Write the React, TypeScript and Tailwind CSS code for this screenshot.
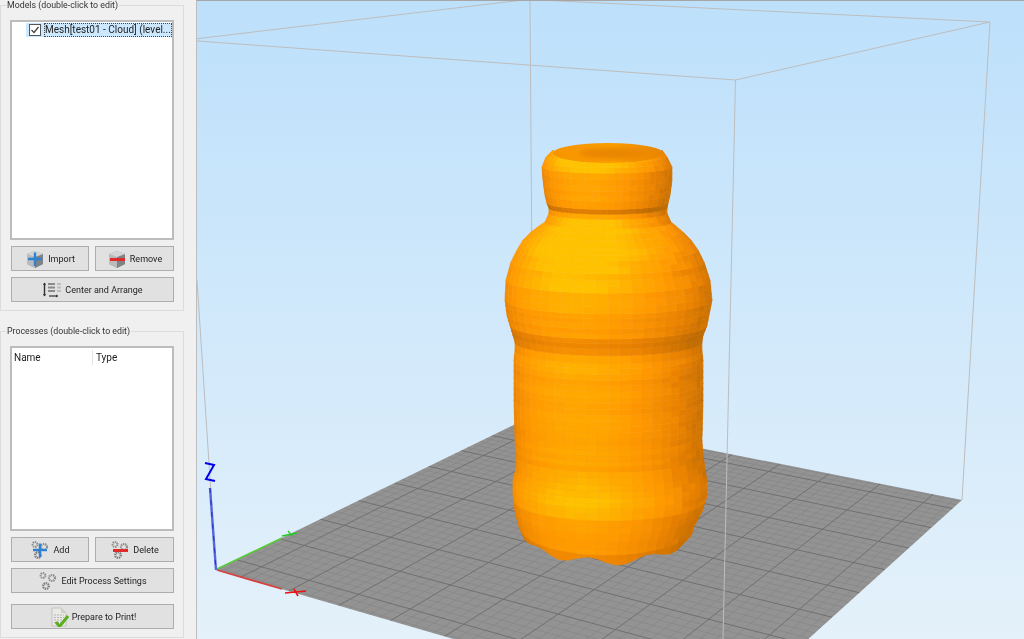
import React from 'react';

type Pt = [number, number];

// plate corners on screen: origin, x end, y end, far corner
const P00: Pt = [216, 570];
const P10: Pt = [722, 717];
const P01: Pt = [534, 415];
const P11: Pt = [962, 500];

const makeHomography = () => {
  const [x0, y0] = P00, [x1, y1] = P10, [x2, y2] = P11, [x3, y3] = P01;
  const dx1 = x1 - x2, dx2 = x3 - x2, sx = x0 - x1 + x2 - x3;
  const dy1 = y1 - y2, dy2 = y3 - y2, sy = y0 - y1 + y2 - y3;
  const d = dx1 * dy2 - dx2 * dy1;
  const g = (sx * dy2 - dx2 * sy) / d;
  const h = (dx1 * sy - sx * dy1) / d;
  const a = x1 - x0 + g * x1, b = x3 - x0 + h * x3, c = x0;
  const e = y1 - y0 + g * y1, f = y3 - y0 + h * y3, i = y0;
  return (u: number, v: number): Pt => {
    const w = g * u + h * v + 1;
    return [(a * u + b * v + c) / w, (e * u + f * v + i) / w];
  };
};
const plate = makeHomography();

// the grid does not start at the plate edge, it leaves a part cell on each side
const MINOR = 5;
const gridLines: { d: string; major: boolean }[] = [];
for (let n = -3 * MINOR; n <= 12 * MINOR; n++) {
  const major = n % MINOR === 0;
  const tu = 0.0587 + (n / MINOR) * 0.1103;
  if (tu > 0 && tu < 1) {
    const a = plate(tu, 0), b = plate(tu, 1);
    gridLines.push({ d: `M${a[0]} ${a[1]}L${b[0]} ${b[1]}`, major });
  }
  const tv = 0.052 + (n / MINOR) * 0.112;
  if (tv > 0 && tv < 1) {
    const c = plate(0, tv), e = plate(1, tv);
    gridLines.push({ d: `M${c[0]} ${c[1]}L${e[0]} ${e[1]}`, major });
  }
}

// bottle profile: axis y, left edge, right edge
const PROFILE: [number, number, number][] = [
  [150, 553, 662], [157, 546, 667], [167, 542, 672], [180, 543, 672], [195, 545, 670], [203, 547, 668],
  [208, 549, 667], [213, 549, 667], [218, 547, 669], [222, 545, 671], [226, 539, 676], [232, 531, 683],
  [240, 523, 691], [250, 517, 698], [262, 511, 704], [280, 506, 710], [300, 505, 712], [315, 507, 709],
  [325, 510, 707], [335, 513, 703], [342, 515, 702], [350, 515, 702], [360, 514, 703], [400, 514, 703],
  [440, 515, 702], [455, 516, 703], [468, 516, 705], [480, 513, 707], [495, 513, 707], [510, 515, 702],
  [522, 518, 695], [531, 522, 692],
];

const RAMP: [number, number, number, number][] = [
  [0.3, 190, 106, 0], [0.6, 232, 128, 0], [0.8, 255, 152, 0], [0.92, 255, 170, 0], [1.0, 255, 194, 0],
];
const shade = (b: number) => {
  if (b <= RAMP[0][0]) return `rgb(${RAMP[0][1]},${RAMP[0][2]},${RAMP[0][3]})`;
  for (let i = 1; i < RAMP.length; i++) {
    if (b <= RAMP[i][0]) {
      const p = RAMP[i - 1], q = RAMP[i], t = (b - p[0]) / (q[0] - p[0]);
      return `rgb(${Math.round(p[1] + (q[1] - p[1]) * t)},${Math.round(p[2] + (q[2] - p[2]) * t)},${Math.round(p[3] + (q[3] - p[3]) * t)})`;
    }
  }
  return 'rgb(255,194,0)';
};

let seed = 7;
const rnd = () => {
  seed = (seed * 16807) % 2147483647;
  return seed / 2147483647 - 0.5;
};

const buildBottle = () => {
  const rings: { y: number; l: number; r: number }[] = [];
  for (let i = 0; i < PROFILE.length - 1; i++) {
    const [y0, l0, r0] = PROFILE[i], [y1, l1, r1] = PROFILE[i + 1];
    const steps = Math.max(1, Math.round((y1 - y0) / 6));
    for (let s = 0; s < steps; s++) {
      const t = s / steps;
      rings.push({ y: y0 + (y1 - y0) * t, l: l0 + (l1 - l0) * t, r: r0 + (r1 - r0) * t });
    }
  }
  rings.push({ y: 531, l: 522, r: 692 });

  const SEGS = 26;
  const point = (ring: { y: number; l: number; r: number }, a: number, last: boolean): Pt => {
    const cx = (ring.l + ring.r) / 2, rad = (ring.r - ring.l) / 2;
    const k = last ? 0.36 : 0.09 + 0.0003 * (ring.y - 150) + (ring.y > 495 ? (ring.y - 495) * 0.004 : 0);
    const wob = last ? 4 * Math.sin(a * 8.5 + 0.3) : 0;
    return [cx + rad * Math.sin(a), ring.y + k * rad * Math.cos(a) + wob * Math.cos(a)];
  };

  const quads: { pts: string; fill: string }[] = [];
  for (let i = rings.length - 2; i >= 0; i--) {
    const top = rings[i], bot = rings[i + 1];
    const last = i === rings.length - 2;
    const slope = ((bot.r - bot.l) - (top.r - top.l)) / 2 / Math.max(1, bot.y - top.y);
    const up = Math.max(-1.2, Math.min(1.2, slope < 0 && !last ? slope * 0.4 : slope));
    const len = Math.hypot(1, up);
    let bandNoise = rnd() * 0.05;
    // grooves under the cap and at the waist, bright band on the base
    if (top.y >= 201 && top.y < 208) bandNoise -= 0.3;
    if (top.y >= 325 && top.y < 336) bandNoise -= 0.15;
    if (top.y >= 480 && top.y < 500) bandNoise += 0.1;
    for (let s = 0; s < SEGS; s++) {
      const a0 = -Math.PI / 2 + (Math.PI * s) / SEGS;
      const a1 = -Math.PI / 2 + (Math.PI * (s + 1)) / SEGS;
      const mid = (a0 + a1) / 2;
      const nx = Math.sin(mid) / len, nz = Math.cos(mid) / len, ny = up / len;
      const dot = -0.28 * nx + 0.75 * ny + 0.8 * nz;
      const side = mid > 0.7 ? rnd() * 0.09 : rnd() * 0.02;
      const b = 0.42 + 0.56 * Math.max(0, dot) + bandNoise + side;
      const p = [point(top, a0, false), point(top, a1, false), point(bot, a1, last), point(bot, a0, last)];
      quads.push({ pts: p.map(q => `${q[0].toFixed(1)},${q[1].toFixed(1)}`).join(' '), fill: shade(b) });
    }
  }
  return quads;
};
const bottleQuads = buildBottle();

const Cube: React.FC = () => (
  <>
    <path d="M2 5 L10 2 L18 5 L18 15 L10 19 L2 15 Z" fill="#9a9da0" />
    <path d="M2 5 L10 8 L10 19 L2 15 Z" fill="#b9bbbd" />
    <path d="M10 8 L18 5 L18 15 L10 19 Z" fill="#7f8386" />
    <path d="M2 5 L10 2 L18 5 L10 8 Z" fill="#d4d5d6" />
  </>
);

const Gears: React.FC = () => (
  <g fill="none">
    <circle cx="5" cy="4.5" r="2.4" stroke="#8d8d8d" strokeWidth="2" strokeDasharray="1.3 0.7" />
    <circle cx="14" cy="7" r="3" stroke="#8d8d8d" strokeWidth="2.2" strokeDasharray="1.4 0.7" />
    <circle cx="8" cy="15" r="2.8" stroke="#7c7c7c" strokeWidth="2.2" strokeDasharray="1.4 0.7" />
  </g>
);

const Plus: React.FC = () => <path d="M10 3.5V17M3 10H17" stroke="#2f82d2" strokeWidth="2.4" />;
const Minus: React.FC = () => <path d="M3 10.5H18" stroke="#e02b2b" strokeWidth="3" />;

const Arrange: React.FC = () => (
  <g>
    <path d="M2.5 3V16" stroke="#333" strokeWidth="1.4" />
    <path d="M1 5L2.5 2.5L4 5M1 14L2.5 16.5L4 14" fill="#333" />
    <path d="M6 4H13M6 7.5H13M6 11H13" stroke="#8a8a8a" strokeWidth="2" />
    <path d="M15 4H19M15 7.5H19M15 11H19" stroke="#bdbdbd" strokeWidth="2" />
    <path d="M7 16H15" stroke="#333" strokeWidth="1.2" />
    <path d="M14 14.5L16.5 16L14 17.5Z" fill="#333" />
  </g>
);

const Doc: React.FC = () => (
  <g>
    <path d="M3 1H12L17 6V19H3Z" fill="#e9e9e6" stroke="#b9b9b4" strokeWidth="0.8" />
    <path d="M12 1V6H17" fill="#cfcfca" />
    <path d="M5 8H15M5 10.5H15M5 13H15M5 15.5H15" stroke="#b4b4ae" strokeWidth="1" strokeDasharray="2 1" />
    <path d="M7 15L10.5 19.5L19 9" fill="none" stroke="#5cae1e" strokeWidth="3" />
  </g>
);

const Btn: React.FC<{ icon: React.ReactNode; label: string; className?: string }> = ({ icon, label, className = '' }) => (
  <button className={`h-[25px] flex items-center justify-center gap-[3px] bg-[#e1e1e1] border border-[#adadad] text-[9px] text-[#222] ${className}`}>
    <svg width="20" height="20" viewBox="0 0 20 20" className="shrink-0">{icon}</svg>
    <span className="mt-[2px]">{label}</span>
  </button>
);

const App: React.FC = () => {
  return (
    <div className="w-[1024px] h-[639px] flex overflow-hidden bg-[#f0f0f0] font-['Roboto','Open_Sans',sans-serif]">
      <aside className="w-[196px] shrink-0 flex flex-col gap-[15px] blur-[0.35px]">
        <fieldset className="w-[184px] min-w-0 h-[311px] border border-[#dcdcdc] pl-[9px] pr-[9px] flex flex-col">
          <legend className="-ml-[4px] px-px text-[8.8px] leading-[10px] text-[#333]">Models (double-click to edit)</legend>
          <div className="mt-[10px] h-[220px] bg-white border-2 border-[#bcbcbf] pl-[14px] pt-px">
            <div className="h-[14px] flex items-center bg-[#cce8ff]">
              <span className="w-[12px] h-[12px] ml-[3px] mr-[3px] shrink-0 bg-white border border-[#555] flex items-center justify-center">
                <svg width="10" height="10" viewBox="0 0 10 10"><path d="M1.5 5L4 7.5L8.5 2" fill="none" stroke="#444" strokeWidth="1.3" /></svg>
              </span>
              <span className="flex-1 min-w-0 h-[14px] border border-dotted border-[#444] text-[10px] leading-[12px] text-[#222] whitespace-nowrap">Mesh[test01 - Cloud] (level...</span>
            </div>
          </div>
          <div className="mt-[6px] ml-px flex gap-[6px]">
            <Btn className="w-[78px]" label="Import" icon={<><Cube /><Plus /></>} />
            <Btn className="w-[79px]" label="Remove" icon={<><Cube /><Minus /></>} />
          </div>
          <Btn className="mt-[6px] ml-px w-[163px]" label="Center and Arrange" icon={<Arrange />} />
        </fieldset>
        <fieldset className="w-[184px] min-w-0 h-[312px] border border-[#dcdcdc] pl-[9px] pr-[9px] flex flex-col">
          <legend className="-ml-[4px] px-px text-[8.8px] leading-[10px] text-[#333]">Processes (double-click to edit)</legend>
          <div className="mt-[10px] h-[185px] bg-white border-2 border-[#bcbcbf] text-[10px] text-[#222]">
            <div className="h-[19px] flex items-center">
              <span className="w-[81px] pl-[2px] border-r border-[#e4e4e4]">Name</span>
              <span className="pl-[3px]">Type</span>
            </div>
          </div>
          <div className="mt-[6px] ml-px flex gap-[6px]">
            <Btn className="w-[78px]" label="Add" icon={<><Gears /><Plus /></>} />
            <Btn className="w-[79px]" label="Delete" icon={<><Gears /><Minus /></>} />
          </div>
          <Btn className="mt-[6px] ml-px w-[163px]" label="Edit Process Settings" icon={<Gears />} />
          <Btn className="mt-[11px] ml-px w-[163px]" label="Prepare to Print!" icon={<Doc />} />
        </fieldset>
      </aside>

      <main className="flex-1 h-[639px] border-l border-t border-l-[#bdbdbd] border-t-[#a6a6a6] bg-gradient-to-b from-[#bde0fb] to-[#e4f1fa]">
        <svg width="827" height="638" viewBox="197 1 827 638" className="block blur-[0.3px]">
          <defs>
            <clipPath id="plate">
              <path d={`M${P00[0]} ${P00[1]}L${P01[0]} ${P01[1]}L${P11[0]} ${P11[1]}L${P10[0]} ${P10[1]}Z`} />
            </clipPath>
            <filter id="soft"><feGaussianBlur stdDeviation="2" /></filter>
            <linearGradient id="rim" x1="0" x2="1" y1="0" y2="0">
              <stop offset="0" stopColor="#f79500" />
              <stop offset="0.55" stopColor="#fb9c00" />
              <stop offset="1" stopColor="#e88400" />
            </linearGradient>
          </defs>

          {/* build volume, back edges */}
          <g stroke="#bdbdbd" strokeWidth="1" fill="none">
            <path d="M197 38.7L523 0" />
            <path d="M990 22L540 0" />
            <path d="M530 0L533 416" />
            <path d="M197 280L216 570" />
          </g>

          {/* print bed */}
          <path d={`M${P00[0]} ${P00[1]}L${P01[0]} ${P01[1]}L${P11[0]} ${P11[1]}L${P10[0]} ${P10[1]}Z`} fill="#939393" />
          <g clipPath="url(#plate)" fill="none">
            {gridLines.filter(l => !l.major).map((l, i) => <path key={i} d={l.d} stroke="#848484" strokeWidth="0.6" />)}
            {gridLines.filter(l => l.major).map((l, i) => <path key={i} d={l.d} stroke="#6c6c6c" strokeWidth="0.9" />)}
          </g>

          {/* axes */}
          <path d="M210 488L216 570" stroke="#5566dd" strokeWidth="2.4" />
          <path d="M210 488L216 570" stroke="#2233cc" strokeWidth="1" strokeDasharray="5 7" />
          <path d="M205 463L214 465L206 479L215 481" fill="none" stroke="#0000ee" strokeWidth="2" />
          <path d="M217 569L282 538" stroke="#55cc33" strokeWidth="1.5" />
          <path d="M282 536L297 533M288 531L292 536" stroke="#22cc22" strokeWidth="1.3" fill="none" />
          <path d="M217 570L282 589" stroke="#d94040" strokeWidth="1.8" />
          <path d="M285 593L306 591M294 589L298 596" stroke="#ee1111" strokeWidth="1.6" fill="none" />

          {/* bottle */}
          {bottleQuads.map((q, i) => <polygon key={i} points={q.pts} fill={q.fill} stroke={q.fill} strokeWidth="0.6" />)}
          <ellipse cx="608" cy="153" rx="55" ry="10" fill="url(#rim)" />
          <ellipse cx="613" cy="153.5" rx="34" ry="5.5" fill="#ea8600" filter="url(#soft)" />

          {/* build volume, front edges */}
          <g stroke="#bdbdbd" strokeWidth="1" fill="none">
            <path d="M197 41L735.5 80L990 22L962 500" />
            <path d="M735.5 80L723 639" />
          </g>
        </svg>
      </main>
    </div>
  );
};

export default App;
